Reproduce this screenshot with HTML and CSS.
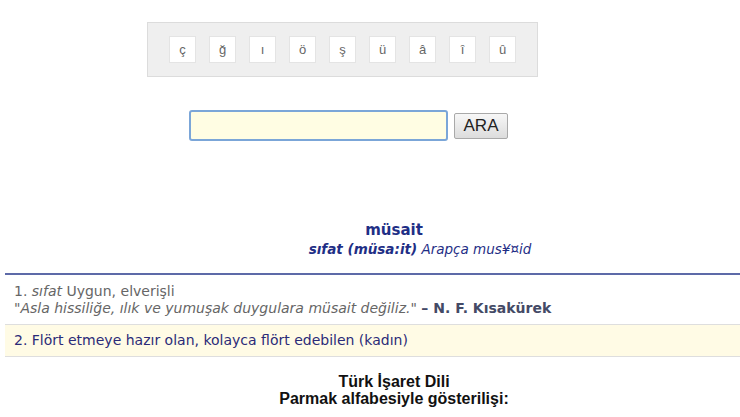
FILE: index.html
```html
<!DOCTYPE html>
<html lang="tr">
<head>
<meta charset="utf-8">
<title>müsait</title>
<link rel="stylesheet" href="styles.css">
</head>
<body>
<div class="page">
  <div class="search-area">
    <div class="keyboard">
      <span class="key">ç</span>
      <span class="key">ğ</span>
      <span class="key">ı</span>
      <span class="key">ö</span>
      <span class="key">ş</span>
      <span class="key">ü</span>
      <span class="key">â</span>
      <span class="key">î</span>
      <span class="key">û</span>
    </div>
    <form class="search-form">
      <input class="search-input" type="text" value="">
      <button class="search-btn" type="button">ARA</button>
    </form>
  </div>

  <div class="results">
    <div class="headword">
      <div class="hw-title">müsait</div>
      <div class="hw-meta"><b>sıfat (müsa:it)</b> Arapça mus¥¤id</div>
    </div>
    <div class="meaning first">
      <div>1. <i>sıfat</i> Uygun, elverişli</div>
      <div class="example"><i>"Asla hissiliğe, ılık ve yumuşak duygulara müsait değiliz."</i> <b>– N. F. Kısakürek</b></div>
    </div>
    <div class="meaning second">
      <div>2. Flört etmeye hazır olan, kolayca flört edebilen (kadın)</div>
    </div>
    <div class="sign">
      <div>Türk İşaret Dili</div>
      <div>Parmak alfabesiyle gösterilişi:</div>
    </div>
  </div>
</div>
</body>
</html>
```

FILE: styles.css
```css
html, body {
  margin: 0;
  padding: 0;
  background: #ffffff;
  overflow: hidden;
}
body {
  font-family: "DejaVu Sans", Verdana, sans-serif;
  width: 740px;
  height: 417px;
}
.page {
  width: 740px;
  overflow: hidden;
}
.search-area {
  width: 685px;
  padding-top: 22px;
  display: flex;
  flex-direction: column;
  align-items: center;
}
.keyboard {
  box-sizing: border-box;
  width: 391px;
  height: 55px;
  background: #efefef;
  border: 1px solid #dcdcdc;
  display: flex;
  align-items: center;
  justify-content: center;
  gap: 13px;
}
.key {
  box-sizing: border-box;
  width: 27px;
  height: 27px;
  background: #ffffff;
  border: 1px solid #e4e4e4;
  display: flex;
  align-items: center;
  justify-content: center;
  font-family: "Liberation Sans", Arial, sans-serif;
  font-size: 13px;
  color: #666;
}
.search-form {
  margin: 33px 0 0 12px;
  display: flex;
  align-items: center;
  gap: 6px;
}
.search-input {
  box-sizing: border-box;
  width: 259px;
  height: 31px;
  background: #fffde3;
  border: 2px solid #7ba6d8;
  border-radius: 3px;
  outline: none;
  margin: 0;
}
.search-btn {
  box-sizing: border-box;
  width: 54px;
  height: 26px;
  margin: 0;
  padding: 0;
  font-family: "Liberation Sans", Arial, sans-serif;
  font-size: 17px;
  color: #222;
  background: linear-gradient(#f7f7f7, #dcdcdc);
  border: 1px solid #a9a9a9;
  border-radius: 2px;
}
.results {
  margin-top: 80px;
  margin-left: 5px;
  width: 778px;
}
.headword {
  text-align: center;
  color: #1f2f86;
  padding-bottom: 14px;
  border-bottom: 2px solid #5d6aa8;
}
.hw-title {
  font-weight: bold;
  font-size: 15px;
  line-height: 18px;
}
.hw-meta {
  font-style: italic;
  font-size: 13.5px;
  line-height: 20px;
  padding-left: 52px;
}
.meaning {
  padding: 0 9px;
  font-size: 14px;
  border-bottom: 1px solid #dedede;
}
.meaning.first {
  color: #666;
  padding-top: 8px;
  padding-bottom: 7px;
  line-height: 17px;
}
.meaning.first b {
  color: #444a66;
}
.meaning.second {
  background: #fffbe5;
  color: #2b2b78;
  line-height: 31px;
}
.sign {
  text-align: center;
  font-family: "Liberation Sans", Arial, sans-serif;
  font-weight: bold;
  font-size: 16px;
  line-height: 17px;
  color: #111;
  padding-top: 16px;
}
```
